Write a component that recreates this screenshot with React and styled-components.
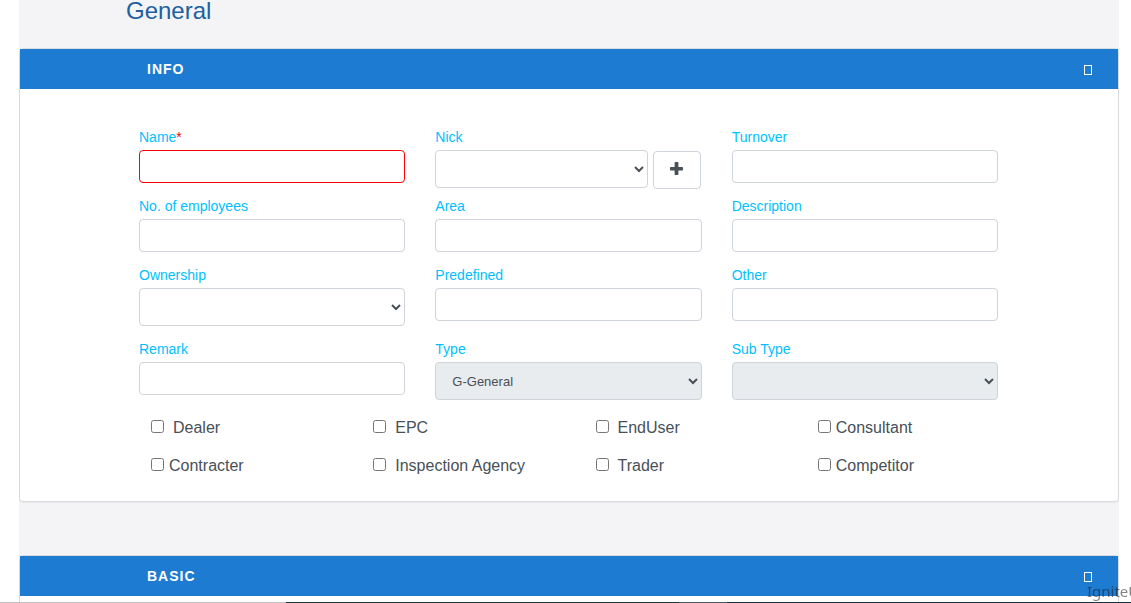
import React from "react";
import styled, { createGlobalStyle } from "styled-components";

const GlobalStyle = createGlobalStyle`
  *, *::before, *::after { box-sizing: border-box; }
  body {
    margin: 0;
    background: #fff;
    color: #495057;
    font-family: "Liberation Sans", Arial, sans-serif;
    font-size: 16px;
    line-height: 24px;
  }
`;

const Page = styled.div`
  height: 100vh;
  overflow: hidden;
  display: flex;
  flex-direction: column;
  padding: 0 12px 0 19px;
`;

const Main = styled.main`
  flex: 1;
  background: #f4f4f7;
`;

const Title = styled.h1`
  margin: 0 0 26px;
  padding-left: 107px;
  font-size: 24px;
  line-height: 22px;
  font-weight: 400;
  color: #20609f;
`;

const Card = styled.section`
  margin-bottom: 53px;
  background: #fff;
  border: 1px solid #d9dcdf;
  border-radius: 4px;
  box-shadow: 0 1px 1px rgba(0, 0, 0, 0.05);
`;

const CardHeader = styled.header`
  display: flex;
  align-items: center;
  justify-content: space-between;
  height: 40px;
  padding: 0 26px 0 127px;
  background: #1d7bd2;
`;

const CardTitle = styled.h2`
  margin: 0;
  font-size: 14px;
  line-height: 20px;
  font-weight: 700;
  letter-spacing: 1px;
  color: #fff;
`;

const ToggleButton = styled.button`
  display: flex;
  padding: 2px 0 0;
  border: 0;
  background: none;
  cursor: pointer;
`;

const ToggleGlyph = styled.span`
  width: 8px;
  height: 10px;
  border: 1px solid #fff;
`;

const CardBody = styled.div`
  min-height: 40px;
  padding: 40px 120px 23px 119px;
`;

const FieldGrid = styled.div`
  display: grid;
  grid-template-columns: repeat(3, minmax(0, 1fr));
  column-gap: 30px;
`;

const FieldBox = styled.div`
  display: flex;
  flex-direction: column;
  padding-bottom: ${(p) => (p.$tight ? "9px" : "15px")};
`;

const FieldLabel = styled.label`
  margin-bottom: 5px;
  font-size: 14px;
  line-height: 16px;
  color: #00bfff;
`;

const Required = styled.span`
  color: #f00;
`;

const TextInput = styled.input`
  width: 100%;
  height: 33px;
  padding: 6px 12px;
  border: 1px solid ${(p) => (p.$invalid ? "#f00" : "#ced4da")};
  border-radius: 4px;
  background: #fff;
  color: #495057;
  font: 13px "Liberation Sans", Arial, sans-serif;
`;

const Select = styled.select`
  width: 100%;
  min-width: 0;
  height: 38px;
  padding: 6px 12px;
  border: 1px solid #ced4da;
  border-radius: 4px;
  background: #fff;
  color: #495057;
  font: 13px "Liberation Sans", Arial, sans-serif;

  &:disabled {
    background: #e9ecef;
    opacity: 1;
  }
`;

const SelectGroup = styled.div`
  display: flex;
  gap: 5px;
  height: 39px;
`;

const AddButton = styled.button`
  display: flex;
  flex: none;
  align-items: center;
  justify-content: center;
  align-self: flex-end;
  width: 48px;
  height: 38px;
  padding: 0 0 3px;
  margin-right: 1px;
  border: 1px solid #ced4da;
  border-radius: 4px;
  background: #fff;
  color: #495057;
  cursor: pointer;
`;

const CheckGrid = styled.div`
  display: grid;
  grid-template-columns: repeat(4, minmax(0, 1fr));
  row-gap: 14px;
  margin: 1px -15px 0;
`;

const CheckLabel = styled.label`
  display: flex;
  align-items: center;
  gap: ${(p) => (p.$narrow ? "5px" : "9px")};
  padding-left: 27px;
  white-space: nowrap;
`;

const Checkbox = styled.input`
  flex: none;
  width: 13px;
  height: 13px;
  margin: 0 0 3px;
`;

const Watermark = styled.div`
  position: fixed;
  left: calc(100% - 44px);
  bottom: 2px;
  font-family: "Noto Sans", sans-serif;
  font-size: 15px;
  line-height: 20px;
  color: rgba(30, 30, 30, 0.55);
`;

const BottomEdge = styled.div`
  position: fixed;
  inset: auto 0 0;
  display: flex;
  height: 1px;
  background: #1b3040;
`;

const EdgeSegment = styled.span`
  flex: 0 0 ${(p) => p.$size};
  background: ${(p) => p.$color};
`;

function PlusIcon() {
  return (
    <svg width="13" height="13" viewBox="0 0 13 13" fill="currentColor" aria-hidden="true">
      <rect x="0" y="5" width="13" height="3.6" rx="0.8" />
      <rect x="4.6" y="0" width="3.8" height="13" rx="0.8" />
    </svg>
  );
}

function Field({ id, label, required, type = "text", options = [""], disabled, addable }) {
  const select = (
    <Select id={id} disabled={disabled}>
      {options.map((option) => (
        <option key={option}>{option}</option>
      ))}
    </Select>
  );
  return (
    <FieldBox $tight={addable}>
      <FieldLabel htmlFor={id}>
        {label}
        {required && <Required>*</Required>}
      </FieldLabel>
      {type === "text" && <TextInput id={id} type="text" $invalid={required} />}
      {type === "select" && !addable && select}
      {addable && (
        <SelectGroup>
          {select}
          <AddButton type="button" aria-label={`Add ${label}`}>
            <PlusIcon />
          </AddButton>
        </SelectGroup>
      )}
    </FieldBox>
  );
}

function Panel({ title, children }) {
  return (
    <Card>
      <CardHeader>
        <CardTitle>{title}</CardTitle>
        <ToggleButton type="button" aria-label={`Toggle ${title}`}>
          <ToggleGlyph />
        </ToggleButton>
      </CardHeader>
      <CardBody>{children}</CardBody>
    </Card>
  );
}

const fields = [
  { id: "name", label: "Name", required: true },
  { id: "nick", label: "Nick", type: "select", addable: true },
  { id: "turnover", label: "Turnover" },
  { id: "employees", label: "No. of employees" },
  { id: "area", label: "Area" },
  { id: "description", label: "Description" },
  { id: "ownership", label: "Ownership", type: "select" },
  { id: "predefined", label: "Predefined" },
  { id: "other", label: "Other" },
  { id: "remark", label: "Remark" },
  { id: "type", label: "Type", type: "select", options: ["G-General"], disabled: true },
  { id: "subtype", label: "Sub Type", type: "select", disabled: true },
];

const roles = [
  { label: "Dealer" },
  { label: "EPC" },
  { label: "EndUser" },
  { label: "Consultant", narrow: true },
  { label: "Contracter", narrow: true },
  { label: "Inspection Agency" },
  { label: "Trader" },
  { label: "Competitor", narrow: true },
];

export default function App() {
  return (
    <Page>
      <GlobalStyle />
      <Main>
        <Title>General</Title>
        <Panel title="INFO">
          <FieldGrid>
            {fields.map((field) => (
              <Field key={field.id} {...field} />
            ))}
          </FieldGrid>
          <CheckGrid>
            {roles.map(({ label, narrow }) => (
              <CheckLabel key={label} $narrow={narrow}>
                <Checkbox type="checkbox" />
                {label}
              </CheckLabel>
            ))}
          </CheckGrid>
        </Panel>
        <Panel title="BASIC" />
      </Main>
      <Watermark>IgniteU</Watermark>
      <BottomEdge>
        <EdgeSegment $size="286px" $color="#c0c0c0" />
        <EdgeSegment $size="393px" $color="#1c3a40" />
        <EdgeSegment $size="48px" $color="#4a5a66" />
      </BottomEdge>
    </Page>
  );
}
